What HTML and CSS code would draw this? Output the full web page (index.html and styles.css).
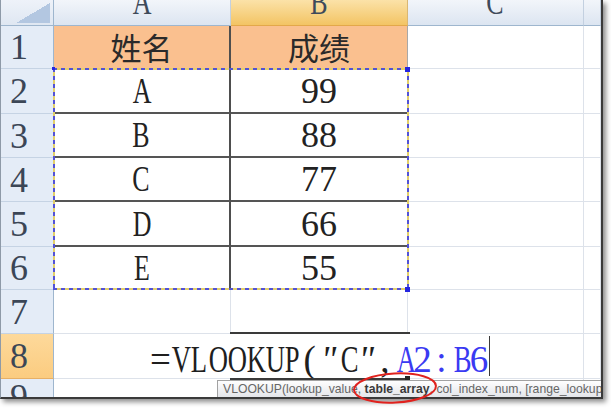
FILE: index.html
```html
<!DOCTYPE html>
<html>
<head>
<meta charset="utf-8">
<link rel="stylesheet" href="styles.css">
</head>
<body>
<div class="page">
  <div class="window">
    <div class="sheet">
      <div class="corner"><div class="tri"></div></div>
      <div class="colhead"><span class="hl n">A</span></div>
      <div class="colhead active"><span class="hl n">B</span></div>
      <div class="colhead"><span class="hl n">C</span></div>
      <div class="colhead"></div>

      <div class="rowhead">1</div>
      <div class="cell peach ca cjk">姓名</div>
      <div class="cell peach cb cjk">成绩</div>
      <div class="cell"></div>
      <div class="cell"></div>

      <div class="rowhead">2</div>
      <div class="cell ca dk"><span class="n">A</span></div>
      <div class="cell cb dk">99</div>
      <div class="cell"></div>
      <div class="cell"></div>

      <div class="rowhead">3</div>
      <div class="cell ca dk"><span class="n">B</span></div>
      <div class="cell cb dk">88</div>
      <div class="cell"></div>
      <div class="cell"></div>

      <div class="rowhead">4</div>
      <div class="cell ca dk"><span class="n">C</span></div>
      <div class="cell cb dk">77</div>
      <div class="cell"></div>
      <div class="cell"></div>

      <div class="rowhead">5</div>
      <div class="cell ca dk"><span class="n">D</span></div>
      <div class="cell cb dk">66</div>
      <div class="cell"></div>
      <div class="cell"></div>

      <div class="rowhead">6</div>
      <div class="cell ca"><span class="n">E</span></div>
      <div class="cell cb">55</div>
      <div class="cell"></div>
      <div class="cell"></div>

      <div class="rowhead">7</div>
      <div class="cell"></div>
      <div class="cell"></div>
      <div class="cell"></div>
      <div class="cell"></div>

      <div class="rowhead active">8</div>
      <div class="cell formula"><span class="g">=</span><span class="g n">V</span><span class="g n">L</span><span class="g n">O</span><span class="g n">O</span><span class="g n">K</span><span class="g n">U</span><span class="g n">P</span><span class="g">(</span><span class="g q">"</span><span class="g n">C</span><span class="g q">"</span><span class="g">,</span><span class="ref"><span class="g n">A</span><span class="g">2</span><span class="g">:</span><span class="g n">B</span><span class="g">6</span></span><span class="caret"></span></div>
      <div class="cell"></div>

      <div class="rowhead">9</div>
      <div class="cell"></div>
      <div class="cell"></div>
      <div class="cell"></div>
      <div class="cell"></div>
    </div>

    <div class="ants"></div>
    <div class="handle h1"></div>
    <div class="handle h2"></div>
    <div class="handle h3"></div>
    <div class="selection"></div>
    <div class="fill"></div>
    <div class="tip">VLOOKUP(lookup_value, <b>table_array</b>, col_index_num, [range_lookup])</div>
  </div>
  <svg class="mark" width="96" height="40" viewBox="0 0 96 40">
    <ellipse cx="46" cy="19" rx="41" ry="14.5" transform="rotate(-3 46 19)" fill="none" stroke="#e0221e" stroke-width="2"/>
  </svg>
</div>
</body>
</html>
```

FILE: styles.css
```css
html, body {
  margin: 0;
  padding: 0;
  background: #ffffff;
}

.page {
  position: relative;
  width: 611px;
  height: 411px;
}

.window {
  position: relative;
  width: 603px;
  height: 399px;
  box-sizing: border-box;
  border-left: 1px solid #8e9aa8;
  border-right: 2px solid #3a3a3a;
  border-bottom: 2px solid #3a3a3a;
  box-shadow: 3px 3px 5px rgba(0, 0, 0, 0.45);
  overflow: hidden;
  background: #ffffff;
}

.sheet {
  display: grid;
  grid-template-columns: 53px 177px 177px 176px 1fr;
  grid-template-rows: 26px 43px 45px 44px 44px 45px 43px 44px 45px 1fr;
  height: 100%;
  font-family: "Liberation Serif", "Times New Roman", serif;
  font-size: 36px;
  line-height: 36px;
  color: #222222;
}

.sheet > div {
  box-sizing: border-box;
  overflow: visible;
  min-width: 0;
}

.corner {
  position: relative;
  background: linear-gradient(#eef2f9, #dfe7f2);
  border-right: 1px solid #9eb6ce;
  border-bottom: 1px solid #9eb6ce;
}

.tri {
  position: absolute;
  right: 3px;
  bottom: 2px;
  width: 34px;
  height: 20px;
  background: linear-gradient(to top left, #b3c7e1 50%, transparent 50%);
}

.colhead {
  display: flex;
  justify-content: center;
  align-items: flex-start;
  overflow: hidden !important;
  background: linear-gradient(#f2f5fa, #dce5f1);
  border-right: 1px solid #c3d0e0;
  border-bottom: 1px solid #9eb6ce;
  color: #3e4a5a;
}

.colhead.active {
  background: linear-gradient(#fbe2a8, #f3c464);
  border-bottom: 1px solid #e3a84a;
  border-right: 1px solid #d9b774;
}

.hl {
  margin-top: -16px;
}

.n {
  display: inline-block;
  transform: scaleX(0.72);
}

.rowhead {
  display: flex;
  align-items: center;
  padding-left: 9px;
  background: #e4ecf7;
  border-right: 1px solid #9eb6ce;
  border-bottom: 1px solid #c5d3e4;
  color: #3b4656;
}

.rowhead.active {
  background: linear-gradient(#fdd99b, #fbcc80);
  border-bottom: 1px solid #e7b066;
}

.cell {
  display: flex;
  align-items: center;
  justify-content: center;
  border-right: 1px solid #dde2ea;
  border-bottom: 1px solid #dde2ea;
  background: #ffffff;
}

.peach {
  background: #fac08f;
}

.cjk {
  font-family: "Noto Sans CJK SC", "Noto Sans CJK JP", sans-serif;
  font-size: 31px;
  color: #2a2a2a;
}

.ca {
  border-right: 2px solid #4e4e4e;
}

.cb {
  border-right: 1px solid #a8a8a8;
}

.dk {
  border-bottom: 2px solid #555555;
}

.formula {
  grid-column: span 3;
  justify-content: flex-start;
  align-items: center;
  padding-left: 96px;
  padding-top: 8px;
  font-size: 37px;
  color: #1e1e1e;
  white-space: nowrap;
}

.g {
  display: inline-block;
  width: 18.8px;
  text-align: center;
}

.g.n {
  transform: scaleX(0.72);
}

.q {
  font-style: italic;
}

.ref {
  color: #3a3af2;
}

.caret {
  display: inline-block;
  width: 1px;
  height: 40px;
  margin-left: 1px;
  margin-top: -8px;
  background: #3a3a3a;
}

.ants {
  position: absolute;
  left: 52px;
  top: 68px;
  width: 356px;
  height: 222px;
  box-sizing: border-box;
  background:
    repeating-linear-gradient(90deg, #5252d6 0 4px, #e2cf6a 4px 8px) top / 100% 2px no-repeat,
    repeating-linear-gradient(90deg, #5252d6 0 4px, #e2cf6a 4px 8px) bottom / 100% 2px no-repeat,
    repeating-linear-gradient(180deg, #5252d6 0 4px, #e2cf6a 4px 8px) left / 2px 100% no-repeat,
    repeating-linear-gradient(180deg, #5252d6 0 4px, #e2cf6a 4px 8px) right / 2px 100% no-repeat;
}

.handle {
  position: absolute;
  width: 5px;
  height: 5px;
  background: #2525e0;
}

.h1 { left: 404px; top: 67px; }
.h2 { left: 404px; top: 287px; }
.h3 { left: 51px; top: 67px; width: 3px; height: 3px; }

.selection {
  position: absolute;
  left: 229px;
  top: 332px;
  width: 180px;
  height: 48px;
  box-sizing: border-box;
  border-top: 2px solid #3a3a3a;
  border-bottom: 2px solid #3a3a3a;
}

.fill {
  position: absolute;
  left: 404px;
  top: 376px;
  width: 5px;
  height: 5px;
  background: #262626;
}

.tip {
  position: absolute;
  left: 216px;
  top: 380px;
  width: 460px;
  height: 18px;
  box-sizing: border-box;
  padding-left: 5px;
  border: 1px solid #a2a2a2;
  background: linear-gradient(#fefefe, #e4e6ea);
  font-family: "Liberation Sans", Arial, sans-serif;
  font-size: 12.2px;
  line-height: 16px;
  color: #666666;
  white-space: nowrap;
}

.tip b {
  color: #3a3a3a;
}

.mark {
  position: absolute;
  left: 349px;
  top: 369px;
}
```
